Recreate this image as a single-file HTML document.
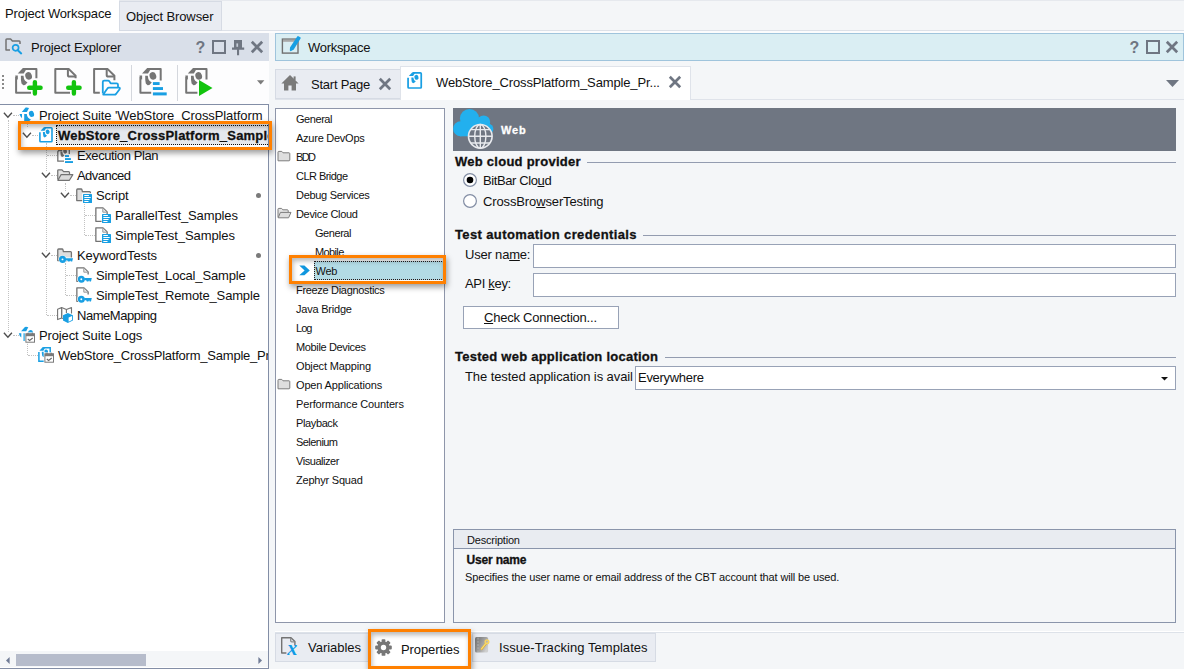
<!DOCTYPE html>
<html lang="en">
<head>
<meta charset="utf-8">
<title>Project Workspace</title>
<style>
html,body{margin:0;padding:0;}
body{width:1184px;height:669px;position:relative;overflow:hidden;background:#f4f6f8;font-family:"Liberation Sans",sans-serif;font-size:13px;color:#111;}
.a{position:absolute;white-space:nowrap;}
.t{position:absolute;white-space:nowrap;line-height:16px;height:16px;margin-top:1px;}
.s{font-size:11px;line-height:14px;height:14px;margin-top:0;}
.b{font-weight:bold;-webkit-text-stroke:0.3px currentColor;}
u{text-decoration:underline;text-underline-offset:1px;}
svg{position:absolute;overflow:visible;}
.hl{position:absolute;height:1px;background:#939cb0;}
.inp{position:absolute;background:#fff;border:1px solid #98a2b6;box-sizing:border-box;}
.ob{position:absolute;border:3px solid #ff8000;box-sizing:border-box;box-shadow:1px 3px 6px rgba(0,0,0,.4), inset 1px 3px 5px rgba(0,0,0,.28);}
.vd{position:absolute;width:0;border-left:1px dotted #c2c2c2;}
.hd{position:absolute;height:0;border-top:1px dotted #c2c2c2;}
</style>
</head>
<body>
<!-- top tabs -->
<div class="a" style="left:0;top:0;width:119px;height:33px;background:#fff;"></div>
<div class="a" style="left:119px;top:30px;width:1065px;height:1px;background:#dde1e8;"></div>
<div class="a" style="left:119px;top:31px;width:1065px;height:2px;background:#fcfcfd;"></div>
<div class="a" style="left:119px;top:0;width:1065px;height:1px;background:#e6e9ee;"></div>
<div class="a" style="left:119px;top:1px;width:103px;height:30px;box-sizing:border-box;background:#e9ecf2;border:1px solid #d6dbe4;"></div>
<div class="t" style="letter-spacing:-0.147px;left:5px;top:5px;">Project Workspace</div>
<div class="t" style="letter-spacing:-0.106px;left:126px;top:8px;">Object Browser</div>

<!-- left header -->
<div class="a" style="left:0;top:33px;width:269px;height:28px;background:#d9dfe9;"></div>
<div class="t" style="letter-spacing:-0.146px;left:31px;top:39px;">Project Explorer</div>

<!-- toolbar -->
<div class="a" style="left:0;top:61px;width:269px;height:43px;background:#fdfdfe;"></div>
<div class="a" style="left:131px;top:65px;width:1px;height:36px;background:#d4d7dd;"></div>
<div class="a" style="left:177px;top:65px;width:1px;height:36px;background:#d4d7dd;"></div>

<div class="a" style="left:2px;top:75px;width:2px;height:16px;background:repeating-linear-gradient(#8a8a8a 0 2px,transparent 2px 4px);"></div>
<svg style="left:0;top:61px" width="269" height="43" viewBox="0 61 269 43"><path d="M31 92.8 L16.1 92.8 L16.1 76.4 M23.1 69.1 L36.4 69.1 L36.4 78.2" fill="none" stroke="#757575" stroke-width="2" stroke-linejoin="round"/><path d="M17.7 73.6 L22.9 68.1 L27.1 68.1 L23.7 73.6 Z" fill="#757575"/><path d="M15.1 75.6 L17.8 75.6 L17.8 79.6 L17.1 79.6 Z" fill="#757575"/><path d="M20.9 75.8 L23.5 75.8 Q23.7 79.4 25.1 80.8 L27.5 82.4 Q25.7 85 23.299999999999997 85.2 L21.5 83.6 Q20.7 80 20.9 75.8 Z" fill="#757575"/><ellipse cx="28.6" cy="75.9" rx="3.3" ry="3.9" transform="rotate(-18 28.6 75.9)" fill="#757575"/><path d="M34.9 82.1 V93.5 M29.2 87.8 H40.6" stroke="#12c40e" stroke-width="4.4" stroke-linecap="round"/><path d="M70 92.8 L55.3 92.8 L55.3 69.1 L68.89999999999999 69.1 L75.6 75.8 L75.6 78.2" fill="none" stroke="#757575" stroke-width="2" stroke-linejoin="round"/><path d="M67.89999999999999 69.6 L67.89999999999999 75 Q67.89999999999999 76.6 69.5 76.6 L75.1 76.6" fill="none" stroke="#757575" stroke-width="2"/><path d="M73.9 82.1 V93.5 M68.2 87.8 H79.60000000000001" stroke="#12c40e" stroke-width="4.4" stroke-linecap="round"/><path d="M99.8 92.8 L94.1 92.8 L94.1 69.1 L107.69999999999999 69.1 L114.39999999999999 75.8 L114.39999999999999 80.2" fill="none" stroke="#757575" stroke-width="2" stroke-linejoin="round"/><path d="M106.69999999999999 69.6 L106.69999999999999 75 Q106.69999999999999 76.6 108.3 76.6 L113.89999999999999 76.6" fill="none" stroke="#757575" stroke-width="2"/><path d="M102.8 93.6 L102.8 82 Q102.8 80.6 104.2 80.6 L108 80.6 Q109 80.6 109.6 81.6 L110.6 83.3 L116.6 83.3 Q118 83.3 118 84.7 L118 87" fill="none" stroke="#199fe3" stroke-width="1.8" stroke-linejoin="round"/><path d="M103.2 94.5 L107.4 88.6 Q108 87.7 109 87.7 L119 87.7 Q120.4 87.9 119.6 89.2 L116 94 Q115.4 94.6 114.6 94.6 Z" fill="#fff" stroke="#199fe3" stroke-width="1.8" stroke-linejoin="round"/><path d="M151.2 92.8 L140.4 92.8 L140.4 76.4 M147.4 69.1 L160.70000000000002 69.1 L160.70000000000002 80.6" fill="none" stroke="#757575" stroke-width="2" stroke-linejoin="round"/><path d="M142.0 73.6 L147.20000000000002 68.1 L151.4 68.1 L148.0 73.6 Z" fill="#757575"/><path d="M139.4 75.6 L142.1 75.6 L142.1 79.6 L141.4 79.6 Z" fill="#757575"/><path d="M145.20000000000002 75.8 L147.8 75.8 Q148.0 79.4 149.4 80.8 L151.8 82.4 Q150.0 85 147.6 85.2 L145.8 83.6 Q145.0 80 145.20000000000002 75.8 Z" fill="#757575"/><ellipse cx="152.9" cy="75.9" rx="3.3" ry="3.9" transform="rotate(-18 152.9 75.9)" fill="#757575"/><rect x="152.9" y="82.1" width="6.7" height="2.9" fill="#199fe3"/><rect x="152.9" y="87.1" width="10.1" height="2.9" fill="#199fe3"/><rect x="152.9" y="92.4" width="13.8" height="3" fill="#199fe3"/><path d="M197.4 92.8 L186.2 92.8 L186.2 76.4 M193.2 69.1 L206.5 69.1 L206.5 79.6" fill="none" stroke="#757575" stroke-width="2" stroke-linejoin="round"/><path d="M187.79999999999998 73.6 L193.0 68.1 L197.2 68.1 L193.79999999999998 73.6 Z" fill="#757575"/><path d="M185.2 75.6 L187.89999999999998 75.6 L187.89999999999998 79.6 L187.2 79.6 Z" fill="#757575"/><path d="M191.0 75.8 L193.6 75.8 Q193.79999999999998 79.4 195.2 80.8 L197.6 82.4 Q195.79999999999998 85 193.39999999999998 85.2 L191.6 83.6 Q190.79999999999998 80 191.0 75.8 Z" fill="#757575"/><ellipse cx="198.7" cy="75.9" rx="3.3" ry="3.9" transform="rotate(-18 198.7 75.9)" fill="#757575"/><path d="M199 80 L212.5 88.1 L199 96 Z" fill="#12c40e"/><path d="M257 80.3 H264.4 L260.7 84.4 Z" fill="#7b7b7b"/></svg>
<!-- tree -->
<div class="a" id="tree" style="left:0;top:104px;width:269px;height:565px;box-sizing:border-box;background:#fff;border:1px solid #838ea6;border-left:none;border-top:none;overflow:hidden;">
<div class="a" style="left:0;top:0;width:269px;height:1px;background:#838ea6;z-index:3;"></div>
<div class="a" style="left:56px;top:21px;width:213px;height:20px;background:#e5e8ed;"></div>
<div class="a" style="left:56px;top:21px;width:230px;height:20px;box-sizing:border-box;border:1px dotted #111;"></div>
<div class="vd" style="left:8px;top:16px;height:212px;"></div>
<div class="hd" style="left:13px;top:11px;width:6px;"></div>
<div class="hd" style="left:13px;top:231px;width:6px;"></div>
<div class="vd" style="left:27px;top:18px;height:5px;"></div>
<div class="hd" style="left:32px;top:31px;width:6px;"></div>
<div class="vd" style="left:46px;top:39px;height:28px;"></div>
<div class="vd" style="left:46px;top:76px;height:71px;"></div>
<div class="vd" style="left:46px;top:156px;height:55px;"></div>
<div class="hd" style="left:47px;top:51px;width:10px;"></div>
<div class="hd" style="left:51px;top:71px;width:6px;"></div>
<div class="hd" style="left:51px;top:151px;width:6px;"></div>
<div class="hd" style="left:47px;top:211px;width:10px;"></div>
<div class="vd" style="left:65px;top:79px;height:8px;"></div>
<div class="hd" style="left:70px;top:91px;width:6px;"></div>
<div class="vd" style="left:84px;top:99px;height:32px;"></div>
<div class="hd" style="left:85px;top:111px;width:10px;"></div>
<div class="hd" style="left:85px;top:131px;width:10px;"></div>
<div class="vd" style="left:65px;top:159px;height:32px;"></div>
<div class="hd" style="left:66px;top:171px;width:10px;"></div>
<div class="hd" style="left:66px;top:191px;width:10px;"></div>
<div class="vd" style="left:27px;top:239px;height:12px;"></div>
<div class="hd" style="left:28px;top:251px;width:10px;"></div>
<svg style="left:19px;top:3px" width="17" height="17" viewBox="0 0 17 17"><g fill="#199fe3"><path d="M2.8 5 L7.9 5 L10 1 Q8.6 0.3 6.6 0.6 Z"/><ellipse cx="12.5" cy="6.9" rx="2.5" ry="3.1" transform="rotate(-18 12.5 6.9)"/><path d="M0.5 7 L3 7 L3 11.2 Q1 9.6 0.5 7 Z"/><path d="M5.2 7 L7.8 7 Q8 9.6 9.2 10.8 Q10.4 12 12 12.4 Q10.6 14.2 8 14.6 L5.2 14.6 Z"/></g></svg>
<div class="t" style="letter-spacing:-0.096px;left:39px;top:3px;">Project Suite 'WebStore_CrossPlatform_Sample' (1 project)</div>
<svg style="left:3px;top:8px" width="10" height="7" viewBox="0 0 10 7"><path d="M0.9 0.8 L4.9 5.2 L8.9 0.8" fill="none" stroke="#4d4d4d" stroke-width="1.35"/></svg>
<svg style="left:38px;top:23px" width="17" height="17" viewBox="0 0 17 17"><path d="M1.9 5.2 L1.9 13.9 Q1.9 14.7 2.7 14.7 L13.2 14.7 Q14 14.7 14 13.9 L14 1.6 Q14 0.8 13.2 0.8 L6.4 0.8" fill="none" stroke="#199fe3" stroke-width="1.6"/><g fill="#199fe3"><path d="M2.6 3.7 L6.6 3.7 L8.4 0.6 L5.8 0.3 Z"/><ellipse cx="9.6" cy="4.9" rx="1.9" ry="2.3" transform="rotate(-18 9.6 4.9)"/><path d="M4.9 5 L6.8 5 Q7 7 7.8 7.8 L9 8.6 Q8 10.2 6.6 10.4 L5.4 9.4 Q4.9 7.4 4.9 5 Z"/></g></svg>
<div class="t b" style="letter-spacing:0.209px;left:58px;top:23px;">WebStore_CrossPlatform_Sample_Project (1 test item)</div>
<svg style="left:22px;top:28px" width="10" height="7" viewBox="0 0 10 7"><path d="M0.9 0.8 L4.9 5.2 L8.9 0.8" fill="none" stroke="#4d4d4d" stroke-width="1.35"/></svg>
<svg style="left:57px;top:43px" width="17" height="17" viewBox="0 0 17 17"><path d="M7 14.2 L0.8 14.2 L0.8 4.6 L3.6 1 L12.3 1 L12.3 7" fill="none" stroke="#737373" stroke-width="1.3" stroke-linejoin="round"/><g transform="translate(3.4 4.6) scale(1.0)" fill="#737373"><path d="M0 0 L1.9 0 Q2.1 2 2.9 2.8 L4.1 3.6 Q3.1 5.2 1.7 5.4 L0.5 4.4 Q0 2.4 0 0 Z"/><ellipse cx="4.7" cy="-0.2" rx="1.9" ry="2.3" transform="rotate(-18 4.7 -0.2)"/></g><path d="M1.4 3.6 L4.4 3.6 L5.6 1.6" fill="none" stroke="#737373" stroke-width="1.2"/><rect x="8" y="8.1" width="4" height="1.9" fill="#199fe3"/><rect x="8" y="11.1" width="5.9" height="1.9" fill="#199fe3"/><rect x="8" y="14.1" width="8" height="1.9" fill="#199fe3"/></svg>
<div class="t" style="letter-spacing:-0.403px;left:77px;top:43px;">Execution Plan</div>
<svg style="left:57px;top:63px" width="17" height="17" viewBox="0 0 17 17"><path d="M0.75 12.6 L0.75 3.6 Q0.75 2.8 1.6 2.8 L5 2.8 L6.6 4.7 L11.6 4.7 Q12.5 4.7 12.5 5.6 L12.5 7.4" fill="#e4e4e4" stroke="#737373" stroke-width="1.25" stroke-linejoin="round"/><path d="M0.9 13.3 L4 7.7 L15.8 7.7 L12.4 13.3 Z" fill="#dcdcdc" stroke="#737373" stroke-width="1.25" stroke-linejoin="round"/></svg>
<div class="t" style="letter-spacing:-0.547px;left:77px;top:63px;">Advanced</div>
<svg style="left:41px;top:68px" width="10" height="7" viewBox="0 0 10 7"><path d="M0.9 0.8 L4.9 5.2 L8.9 0.8" fill="none" stroke="#4d4d4d" stroke-width="1.35"/></svg>
<svg style="left:76px;top:83px" width="17" height="17" viewBox="0 0 17 17"><path d="M0.75 13.6 L0.75 2.9 Q0.75 2 1.6 2 L5 2 Q5.8 2 6 2.8 L6.4 4.7 L13.6 4.7 Q14.4 4.7 14.4 5.6 L14.4 13.6 Z" fill="#dedede" stroke="#737373" stroke-width="1.3" stroke-linejoin="round"/><rect x="6.2" y="6.2" width="11" height="11" fill="#fff"/><rect x="7" y="7" width="9" height="9" rx="0.6" fill="#199fe3"/><rect x="8.3" y="8" width="4.6" height="1" fill="#fff"/><rect x="8.3" y="10" width="6.4" height="1" fill="#fff"/><rect x="8.3" y="12" width="5.2" height="1" fill="#fff"/><rect x="8.3" y="14" width="4.2" height="1" fill="#fff"/></svg>
<div class="t" style="letter-spacing:-0.127px;left:96px;top:83px;">Script</div>
<svg style="left:60px;top:88px" width="10" height="7" viewBox="0 0 10 7"><path d="M0.9 0.8 L4.9 5.2 L8.9 0.8" fill="none" stroke="#4d4d4d" stroke-width="1.35"/></svg>
<div class="a" style="left:256px;top:89px;width:5px;height:5px;border-radius:3px;background:#7a7a7a;"></div>
<svg style="left:95px;top:103px" width="17" height="17" viewBox="0 0 17 17"><path d="M6.6 14.35 L0.85 14.35 L0.85 0.85 L8 0.85 L12.15 5 L12.15 7.4" fill="none" stroke="#737373" stroke-width="1.3" stroke-linejoin="round"/><path d="M7.8 1.2 L7.8 5.2 L11.8 5.2" fill="#e9e9e9" stroke="#9b9b9b" stroke-width="1"/><rect x="7" y="7" width="9" height="9" rx="0.6" fill="#199fe3"/><rect x="8.3" y="8" width="4.6" height="1" fill="#fff"/><rect x="8.3" y="10" width="6.4" height="1" fill="#fff"/><rect x="8.3" y="12" width="5.2" height="1" fill="#fff"/><rect x="8.3" y="14" width="4.2" height="1" fill="#fff"/></svg>
<div class="t" style="letter-spacing:-0.106px;left:115px;top:103px;">ParallelTest_Samples</div>
<svg style="left:95px;top:123px" width="17" height="17" viewBox="0 0 17 17"><path d="M6.6 14.35 L0.85 14.35 L0.85 0.85 L8 0.85 L12.15 5 L12.15 7.4" fill="none" stroke="#737373" stroke-width="1.3" stroke-linejoin="round"/><path d="M7.8 1.2 L7.8 5.2 L11.8 5.2" fill="#e9e9e9" stroke="#9b9b9b" stroke-width="1"/><rect x="7" y="7" width="9" height="9" rx="0.6" fill="#199fe3"/><rect x="8.3" y="8" width="4.6" height="1" fill="#fff"/><rect x="8.3" y="10" width="6.4" height="1" fill="#fff"/><rect x="8.3" y="12" width="5.2" height="1" fill="#fff"/><rect x="8.3" y="14" width="4.2" height="1" fill="#fff"/></svg>
<div class="t" style="letter-spacing:-0.082px;left:115px;top:123px;">SimpleTest_Samples</div>
<svg style="left:57px;top:143px" width="17" height="17" viewBox="0 0 17 17"><path d="M0.75 13.6 L0.75 2.9 Q0.75 2 1.6 2 L5 2 Q5.8 2 6 2.8 L6.4 4.7 L13.6 4.7 Q14.4 4.7 14.4 5.6 L14.4 10 L14.4 13.6 Z" fill="#dedede" stroke="#737373" stroke-width="1.3" stroke-linejoin="round"/><g fill="#fff" stroke="#fff" stroke-width="1.2"><circle cx="5.5" cy="12.4" r="3.4"/><path d="M8.4 11.2 H16 L15.2 14.600000000000001 H13.8 L13.3 13.4 L12.6 14.600000000000001 H11 L10.4 13.4 H8.4 Z"/></g><circle cx="5.5" cy="12.4" r="2.25" fill="#fff" stroke="#199fe3" stroke-width="2.6"/><g fill="#199fe3"><path d="M8.4 11.2 H16 L15.2 14.600000000000001 H13.8 L13.3 13.4 L12.6 14.600000000000001 H11 L10.4 13.4 H8.4 Z"/></g></svg>
<div class="t" style="letter-spacing:-0.084px;left:77px;top:143px;">KeywordTests</div>
<svg style="left:41px;top:148px" width="10" height="7" viewBox="0 0 10 7"><path d="M0.9 0.8 L4.9 5.2 L8.9 0.8" fill="none" stroke="#4d4d4d" stroke-width="1.35"/></svg>
<div class="a" style="left:256px;top:149px;width:5px;height:5px;border-radius:3px;background:#7a7a7a;"></div>
<svg style="left:76px;top:163px" width="17" height="17" viewBox="0 0 17 17"><path d="M2.2 14.35 L0.85 14.35 L0.85 0.85 L8 0.85 L12.15 5 L12.15 7.4" fill="none" stroke="#737373" stroke-width="1.3" stroke-linejoin="round"/><path d="M7.8 1.2 L7.8 5.2 L11.8 5.2" fill="#e9e9e9" stroke="#9b9b9b" stroke-width="1"/><g fill="#fff" stroke="#fff" stroke-width="1.2"><circle cx="5.3" cy="12.3" r="3.4"/><path d="M8.200000000000001 11.100000000000001 H15.8 L15.0 14.5 H13.600000000000001 L13.100000000000001 13.3 L12.4 14.5 H10.8 L10.200000000000001 13.3 H8.200000000000001 Z"/></g><circle cx="5.3" cy="12.3" r="2.25" fill="#fff" stroke="#199fe3" stroke-width="2.6"/><g fill="#199fe3"><path d="M8.200000000000001 11.100000000000001 H15.8 L15.0 14.5 H13.600000000000001 L13.100000000000001 13.3 L12.4 14.5 H10.8 L10.200000000000001 13.3 H8.200000000000001 Z"/></g></svg>
<div class="t" style="letter-spacing:-0.159px;left:96px;top:163px;">SimpleTest_Local_Sample</div>
<svg style="left:76px;top:183px" width="17" height="17" viewBox="0 0 17 17"><path d="M2.2 14.35 L0.85 14.35 L0.85 0.85 L8 0.85 L12.15 5 L12.15 7.4" fill="none" stroke="#737373" stroke-width="1.3" stroke-linejoin="round"/><path d="M7.8 1.2 L7.8 5.2 L11.8 5.2" fill="#e9e9e9" stroke="#9b9b9b" stroke-width="1"/><g fill="#fff" stroke="#fff" stroke-width="1.2"><circle cx="5.3" cy="12.3" r="3.4"/><path d="M8.200000000000001 11.100000000000001 H15.8 L15.0 14.5 H13.600000000000001 L13.100000000000001 13.3 L12.4 14.5 H10.8 L10.200000000000001 13.3 H8.200000000000001 Z"/></g><circle cx="5.3" cy="12.3" r="2.25" fill="#fff" stroke="#199fe3" stroke-width="2.6"/><g fill="#199fe3"><path d="M8.200000000000001 11.100000000000001 H15.8 L15.0 14.5 H13.600000000000001 L13.100000000000001 13.3 L12.4 14.5 H10.8 L10.200000000000001 13.3 H8.200000000000001 Z"/></g></svg>
<div class="t" style="letter-spacing:-0.163px;left:96px;top:183px;">SimpleTest_Remote_Sample</div>
<svg style="left:57px;top:203px" width="17" height="17" viewBox="0 0 17 17"><path d="M0.6 2.2 L4.6 0.6 L4.6 11 L0.6 12.6 Z M4.6 0.6 L9.4 2.6 L14.5 0.6 L14.5 6.4 M9.4 2.6 L9.4 6 M4.6 11 L6 11.6" fill="none" stroke="#737373" stroke-width="1.1" stroke-linejoin="round"/><path d="M5.5 1.4 L5.5 10.6" stroke="#c4c4c4" stroke-width="0.8"/><path d="M10.8 6 L15.9 8.2 L15.9 13.6 L10.8 16 L6 13.6 L6 8.2 Z" fill="#199fe3"/><path d="M11.6 10.4 L15 8.9 L15 13.1 L11.6 14.7 Z" fill="#fff"/></svg>
<div class="t" style="letter-spacing:-0.455px;left:77px;top:203px;">NameMapping</div>
<svg style="left:19px;top:223px" width="17" height="17" viewBox="0 0 17 17"><g transform="translate(-0.7,-0.7)"><g fill="#199fe3"><path d="M2.8 5 L7.9 5 L10 1 Q8.6 0.3 6.6 0.6 Z"/><ellipse cx="12.5" cy="6.9" rx="2.5" ry="3.1" transform="rotate(-18 12.5 6.9)"/><path d="M0.5 7 L3 7 L3 11.2 Q1 9.6 0.5 7 Z"/><path d="M5.2 7 L7.8 7 Q8 9.6 9.2 10.8 Q10.4 12 12 12.4 Q10.6 14.2 8 14.6 L5.2 14.6 Z"/></g></g><rect x="5.7" y="5.4" width="11" height="11.4" fill="#fff"/><rect x="6.9" y="6.8" width="8.6" height="8.4" fill="#fff" stroke="#7a7a7a" stroke-width="1"/><rect x="6.9" y="6.6" width="8.6" height="2.6" fill="#7a7a7a"/><path d="M8.8 12.0 L10.600000000000001 13.5 L13.7 11.0" fill="none" stroke="#6a6a6a" stroke-width="1.1"/><path d="M9.0 5.8 v1.4 M13.4 5.8 v1.4" stroke="#7a7a7a" stroke-width="1.3"/></svg>
<div class="t" style="letter-spacing:-0.13px;left:39px;top:223px;">Project Suite Logs</div>
<svg style="left:3px;top:228px" width="10" height="7" viewBox="0 0 10 7"><path d="M0.9 0.8 L4.9 5.2 L8.9 0.8" fill="none" stroke="#4d4d4d" stroke-width="1.35"/></svg>
<svg style="left:38px;top:243px" width="17" height="17" viewBox="0 0 17 17"><path d="M7 14.3 L0.9 14.3 L0.9 5 M5.4 0.8 L12.2 0.8 L12.2 6.4" fill="none" stroke="#199fe3" stroke-width="1.5"/><g fill="#199fe3"><path d="M1.4 3.7 L5.4 3.7 L7.2 0.6 L4.8 0.1 Z"/></g><g transform="translate(3.8 4.8) scale(0.95)" fill="#199fe3"><path d="M0 0 L1.9 0 Q2.1 2 2.9 2.8 L4.1 3.6 Q3.1 5.2 1.7 5.4 L0.5 4.4 Q0 2.4 0 0 Z"/><ellipse cx="4.7" cy="-0.2" rx="1.9" ry="2.3" transform="rotate(-18 4.7 -0.2)"/></g><rect x="5.7" y="5.4" width="11" height="11.4" fill="#fff"/><rect x="6.9" y="6.8" width="8.6" height="8.4" fill="#fff" stroke="#7a7a7a" stroke-width="1"/><rect x="6.9" y="6.6" width="8.6" height="2.6" fill="#7a7a7a"/><path d="M8.8 12.0 L10.600000000000001 13.5 L13.7 11.0" fill="none" stroke="#6a6a6a" stroke-width="1.1"/><path d="M9.0 5.8 v1.4 M13.4 5.8 v1.4" stroke="#7a7a7a" stroke-width="1.3"/></svg>
<div class="t" style="letter-spacing:-0.219px;left:58px;top:243px;">WebStore_CrossPlatform_Sample_Project Log</div>
</div>
<!-- scrollbar -->
<div class="a" style="left:0;top:651px;width:268px;height:16px;background:#f4f6f8;"></div>
<div class="a" style="left:16px;top:654px;width:130px;height:12px;background:#b6bccb;"></div>
<div class="a" style="left:0;top:667px;width:268px;height:1px;background:#fff;"></div>
<svg style="left:6px;top:657px" width="4" height="7" viewBox="0 0 4 7"><path d="M3.6 0 V7 L0 3.5 Z" fill="#707c96"/></svg>
<svg style="left:258px;top:657px" width="4" height="7" viewBox="0 0 4 7"><path d="M0.4 0 V7 L4 3.5 Z" fill="#707c96"/></svg>

<!-- workspace header -->
<div class="a" style="left:275px;top:33px;width:909px;height:28px;box-sizing:border-box;background:#daeef3;border:1px solid #9fc4dc;"></div>
<div class="t" style="letter-spacing:-0.3px;left:308px;top:39px;">Workspace</div>

<!-- doc tabs -->
<div class="a" style="left:275px;top:99px;width:909px;height:1px;background:#dfe3ea;"></div>
<div class="a" style="left:275px;top:69px;width:126px;height:30px;box-sizing:border-box;background:#e9ecf2;border:1px solid #d6dbe4;"></div>
<div class="a" style="left:400px;top:66px;width:291px;height:34px;box-sizing:border-box;background:#fff;border:1px solid #dfe3ea;border-bottom:none;"></div>
<div class="t" style="letter-spacing:-0.238px;left:311px;top:76px;">Start Page</div>
<div class="t" style="letter-spacing:-0.142px;left:436px;top:74px;">WebStore_CrossPlatform_Sample_Pr...</div>

<!-- list box -->
<div class="a" style="left:275px;top:108px;width:170px;height:515px;box-sizing:border-box;background:#fff;border:1px solid #8e96aa;"></div>
<div class="a" style="left:314px;top:261px;width:130px;height:19px;box-sizing:border-box;background:#b3dbe5;border:1px dotted #2a1a1a;"></div>

<div class="t s" style="letter-spacing:-0.44px;left:296px;top:112px;">General</div>
<div class="t s" style="letter-spacing:-0.248px;left:296px;top:131px;">Azure DevOps</div>
<div class="t s" style="letter-spacing:-1.617px;left:296px;top:150px;">BDD</div>
<svg style="left:277px;top:150px" width="15" height="12" viewBox="0 0 15 12"><path d="M1 10.8 L1 2.2 Q1 1.4 1.8 1.4 L4.8 1.4 L6 2.8 L12 2.8 Q12.8 2.8 12.8 3.6 L12.8 10 Q12.8 10.8 12 10.8 Z" fill="#dedede" stroke="#7d7d7d" stroke-width="1" stroke-linejoin="round"/></svg>
<div class="t s" style="letter-spacing:-0.54px;left:296px;top:169px;">CLR Bridge</div>
<div class="t s" style="letter-spacing:-0.297px;left:296px;top:188px;">Debug Services</div>
<div class="t s" style="letter-spacing:-0.32px;left:296px;top:207px;">Device Cloud</div>
<svg style="left:277px;top:207px" width="15" height="12" viewBox="0 0 15 12"><path d="M1 10.4 L1 2.2 Q1 1.4 1.8 1.4 L4.6 1.4 L5.8 2.8 L10.4 2.8 Q11.2 2.8 11.2 3.6 L11.2 5" fill="#e4e4e4" stroke="#7d7d7d" stroke-width="1"/><path d="M1.2 10.8 L3.4 5.4 L14 5.4 L11.6 10.8 Z" fill="#dedede" stroke="#7d7d7d" stroke-width="1" stroke-linejoin="round"/></svg>
<div class="t s" style="letter-spacing:-0.44px;left:315px;top:226px;">General</div>
<div class="t s" style="letter-spacing:-0.621px;left:315px;top:245px;">Mobile</div>
<div class="t s" style="letter-spacing:-0.311px;left:315.6px;top:264px;">Web</div>
<div class="t s" style="letter-spacing:-0.315px;left:296px;top:283px;">Freeze Diagnostics</div>
<div class="t s" style="letter-spacing:-0.219px;left:296px;top:302px;">Java Bridge</div>
<div class="t s" style="letter-spacing:-0.98px;left:296px;top:321px;">Log</div>
<div class="t s" style="letter-spacing:-0.353px;left:296px;top:340px;">Mobile Devices</div>
<div class="t s" style="letter-spacing:-0.157px;left:296px;top:359px;">Object Mapping</div>
<div class="t s" style="letter-spacing:-0.154px;left:296px;top:378px;">Open Applications</div>
<svg style="left:277px;top:378px" width="15" height="12" viewBox="0 0 15 12"><path d="M1 10.8 L1 2.2 Q1 1.4 1.8 1.4 L4.8 1.4 L6 2.8 L12 2.8 Q12.8 2.8 12.8 3.6 L12.8 10 Q12.8 10.8 12 10.8 Z" fill="#dedede" stroke="#7d7d7d" stroke-width="1" stroke-linejoin="round"/></svg>
<div class="t s" style="letter-spacing:-0.146px;left:296px;top:397px;">Performance Counters</div>
<div class="t s" style="letter-spacing:-0.377px;left:296px;top:416px;">Playback</div>
<div class="t s" style="letter-spacing:-0.551px;left:296px;top:435px;">Selenium</div>
<div class="t s" style="letter-spacing:-0.456px;left:296px;top:454px;">Visualizer</div>
<div class="t s" style="letter-spacing:-0.21px;left:296px;top:473px;">Zephyr Squad</div>
<svg style="left:299px;top:264.7px" width="11" height="11" viewBox="0 0 11 11"><path d="M0.3 0.5 L5.4 0.5 L10.8 5.4 L5.4 10.3 L0.3 10.3 L5.6 5.4 Z" fill="#0f96de"/></svg>
<!-- right panel -->
<div class="a" style="left:453px;top:108px;width:723px;height:43px;background:#6f7682;"></div>
<div class="t s b" style="letter-spacing:0.884px;left:501px;top:123px;color:#fff;">Web</div>

<div class="t b" style="letter-spacing:0.258px;left:455px;top:153px;">Web cloud provider</div>
<div class="hl" style="left:587px;top:162px;width:589px;"></div>
<div class="t" style="letter-spacing:-0.4px;left:483px;top:172px;">BitBar Clo<u>u</u>d</div>
<div class="t" style="letter-spacing:-0.129px;left:483px;top:193px;">CrossBro<u>w</u>serTesting</div>

<div class="t b" style="letter-spacing:0.377px;left:455px;top:226px;">Test automation credentials</div>
<div class="hl" style="left:643px;top:235px;width:533px;"></div>
<div class="t" style="letter-spacing:-0.191px;left:465px;top:246px;">User na<u>m</u>e:</div>
<div class="inp" style="left:533px;top:244px;width:643px;height:24px;"></div>
<div class="t" style="letter-spacing:-0.317px;left:465px;top:275px;">API <u>k</u>ey:</div>
<div class="inp" style="left:533px;top:273px;width:643px;height:24px;"></div>
<div class="inp" style="left:463px;top:306px;width:156px;height:23px;"></div>
<div class="t" style="letter-spacing:-0.227px;left:484px;top:309px;"><u>C</u>heck Connection...</div>

<div class="t b" style="letter-spacing:0.249px;left:455px;top:348px;">Tested web application location</div>
<div class="hl" style="left:665px;top:357px;width:511px;"></div>
<div class="t" style="letter-spacing:-0.085px;left:465px;top:368px;">The tested application is avail</div>
<div class="inp" style="left:635px;top:366px;width:541px;height:24px;"></div>
<div class="t" style="letter-spacing:-0.293px;left:638px;top:369px;">Everywhere</div>

<!-- description -->
<div class="a" style="left:453px;top:529px;width:723px;height:94px;box-sizing:border-box;border:1px solid #8a95ab;"></div>
<div class="a" style="left:454px;top:530px;width:721px;height:18px;background:#e9ecf1;border-bottom:1px solid #8a95ab;"></div>
<div class="t s" style="letter-spacing:-0.203px;left:467px;top:533px;">Description</div>
<div class="t s b" style="letter-spacing:-0.172px;left:466.5px;top:553px;font-size:12px;">User name</div>
<div class="t s" style="letter-spacing:-0.13px;left:465px;top:570px;">Specifies the user name or email address of the CBT account that will be used.</div>

<!-- bottom tabs -->
<div class="a" style="left:275px;top:631px;width:909px;height:1px;background:#fff;border-bottom:1px solid #dde2e9;"></div>
<div class="a" style="left:275px;top:633px;width:95px;height:29px;box-sizing:border-box;background:#e9ecf2;border:1px solid #d6dbe4;"></div>
<div class="a" style="left:472px;top:633px;width:184px;height:29px;box-sizing:border-box;background:#e9ecf2;border:1px solid #d6dbe4;"></div>
<div class="a" style="left:371px;top:632px;width:97px;height:34px;background:#fff;"></div>
<div class="t" style="letter-spacing:-0.029px;left:308px;top:639px;">Variables</div>
<div class="t" style="letter-spacing:-0.094px;left:401px;top:641px;">Properties</div>
<div class="t" style="letter-spacing:0.052px;left:499px;top:639px;">Issue-Tracking Templates</div>

<svg style="left:4px;top:37px" width="20" height="20" viewBox="0 0 20 20"><path d="M6 13 L2 13 L2 2.8 Q2 2 2.8 2 L6.6 2 L8.4 4 L15.2 4 Q16 4 16 4.8 L16 7" fill="none" stroke="#737373" stroke-width="1.5" stroke-linejoin="round"/><circle cx="11.6" cy="10.8" r="3" fill="none" stroke="#199fe3" stroke-width="1.7"/><path d="M13.8 13.2 L17.2 16.4" stroke="#199fe3" stroke-width="2" stroke-linecap="round"/></svg>
<div class="t b" style="left:195.5px;top:39px;font-size:16px;color:#6f7682;font-weight:bold;-webkit-text-stroke:0;">?</div>
<div class="a" style="left:212px;top:40px;width:14px;height:14px;box-sizing:border-box;border:2px solid #6f7682;"></div>
<svg style="left:232px;top:40px" width="13" height="16" viewBox="0 0 13 16"><path d="M2 0 H10 V7.6 H12.2 V9.7 H7.1 V15.2 H5 V9.7 H0 V7.6 H2 Z" fill="#6f7682"/><rect x="4.4" y="3.4" width="1.7" height="3.4" fill="#c5ccd8"/></svg>
<svg style="left:251px;top:41px" width="12" height="12" viewBox="0 0 12 12"><path d="M0.8 0.8 L11.2 11.2 M11.2 0.8 L0.8 11.2" stroke="#6f7682" stroke-width="2.7"/></svg>
<svg style="left:281px;top:36px" width="20" height="20" viewBox="0 0 20 20"><rect x="1.4" y="3.1" width="15.6" height="14" fill="none" stroke="#707070" stroke-width="1.4"/><rect x="2" y="3.6" width="14.4" height="2.2" fill="#a8a8a8"/><path d="M17 1 L18.8 2.1 L12 13 L9.7 14.2 L9.9 11.7 Z" fill="#199fe3" stroke="#199fe3" stroke-width="1.8" stroke-linejoin="round"/></svg>
<div class="t b" style="left:1129.5px;top:39px;font-size:16px;color:#6f7682;font-weight:bold;-webkit-text-stroke:0;">?</div>
<div class="a" style="left:1146px;top:40px;width:14px;height:14px;box-sizing:border-box;border:2px solid #6f7682;"></div>
<svg style="left:1166px;top:41px" width="12" height="12" viewBox="0 0 12 12"><path d="M0.8 0.8 L11.2 11.2 M11.2 0.8 L0.8 11.2" stroke="#6f7682" stroke-width="2.7"/></svg>
<svg style="left:1166px;top:80px" width="13" height="7" viewBox="0 0 13 7"><path d="M0 0 H13 L6.5 7 Z" fill="#6f7682"/></svg>
<svg style="left:281px;top:74px" width="18" height="18" viewBox="0 0 18 18"><path d="M9 1 L17.6 9.4 L15 9.4 L15 16.4 L10.6 16.4 L10.6 11.4 L7.4 11.4 L7.4 16.4 L3 16.4 L3 9.4 L0.4 9.4 Z" fill="#7a7a7a"/><rect x="12.6" y="2.4" width="2" height="4" fill="#7a7a7a"/></svg>
<svg style="left:379px;top:78px" width="12" height="12" viewBox="0 0 12 12"><path d="M0.8 0.8 L11.2 11.2 M11.2 0.8 L0.8 11.2" stroke="#6f7682" stroke-width="2.7"/></svg>
<svg style="left:669px;top:76px" width="12" height="12" viewBox="0 0 12 12"><path d="M0.8 0.8 L11.2 11.2 M11.2 0.8 L0.8 11.2" stroke="#6f7682" stroke-width="2.7"/></svg>
<svg style="left:406.3px;top:72.2px" width="18.5" height="18.5" viewBox="0 0 17 17"><path d="M1.9 5.2 L1.9 13.9 Q1.9 14.7 2.7 14.7 L13.2 14.7 Q14 14.7 14 13.9 L14 1.6 Q14 0.8 13.2 0.8 L6.4 0.8" fill="none" stroke="#199fe3" stroke-width="1.6"/><g fill="#199fe3"><path d="M2.6 3.7 L6.6 3.7 L8.4 0.6 L5.8 0.3 Z"/><ellipse cx="9.6" cy="4.9" rx="1.9" ry="2.3" transform="rotate(-18 9.6 4.9)"/><path d="M4.9 5 L6.8 5 Q7 7 7.8 7.8 L9 8.6 Q8 10.2 6.6 10.4 L5.4 9.4 Q4.9 7.4 4.9 5 Z"/></g></svg>
<svg style="left:453px;top:108px;overflow:hidden" width="60" height="42" viewBox="0 0 60 42"><g fill="#22b0ee"><circle cx="16.5" cy="10.5" r="9.6"/><circle cx="30.6" cy="14" r="6.6"/><circle cx="7.6" cy="20.8" r="7.5"/><circle cx="35" cy="21" r="5.4"/><rect x="7" y="14" width="28" height="14.3"/></g><circle cx="27.3" cy="28.3" r="11.8" fill="#6f7682" stroke="#e8eaee" stroke-width="1.6"/><ellipse cx="27.3" cy="28.3" rx="5.6" ry="11.8" fill="none" stroke="#e8eaee" stroke-width="1.4"/><path d="M27.3 16.5 V40.1 M15.5 28.3 H39.1 M17.6 21.6 H37 M17.6 35 H37" stroke="#e8eaee" stroke-width="1.4" fill="none"/></svg>
<svg style="left:462px;top:172px" width="16" height="38" viewBox="0 0 16 38"><circle cx="8" cy="8" r="6.4" fill="#fff" stroke="#828da4" stroke-width="1.2"/><circle cx="8" cy="8" r="3.3" fill="#000"/><circle cx="8" cy="29" r="6.4" fill="#fff" stroke="#828da4" stroke-width="1.2"/></svg>
<svg style="left:1161.4px;top:377px" width="8" height="4" viewBox="0 0 8 4"><path d="M0 0 H7 L3.5 3.6 Z" fill="#111"/></svg>
<svg style="left:279px;top:637px" width="22" height="22" viewBox="0 0 22 22"><path d="M7.4 16 L2.7 16 L2.7 0.7 L12 0.7 L15.9 4.6 L15.9 8.5" fill="none" stroke="#737373" stroke-width="1.4" stroke-linejoin="round"/><path d="M11.7 1 L11.7 3.8 Q11.7 4.9 12.8 4.9 L15.6 4.9" fill="none" stroke="#8a8a8a" stroke-width="1.3"/><text x="8.2" y="17.6" font-family="Liberation Serif,serif" font-style="italic" font-weight="bold" font-size="20" fill="#0f9be6">x</text></svg>
<svg style="left:375px;top:639px" width="17" height="17" viewBox="0 0 17 17"><g transform="translate(8.5 8.5)" fill="#777"><circle r="6"/><rect x="-1.9" y="-8.3" width="3.8" height="4" rx="0.9" transform="rotate(0)" /><rect x="-1.9" y="-8.3" width="3.8" height="4" rx="0.9" transform="rotate(45)" /><rect x="-1.9" y="-8.3" width="3.8" height="4" rx="0.9" transform="rotate(90)" /><rect x="-1.9" y="-8.3" width="3.8" height="4" rx="0.9" transform="rotate(135)" /><rect x="-1.9" y="-8.3" width="3.8" height="4" rx="0.9" transform="rotate(180)" /><rect x="-1.9" y="-8.3" width="3.8" height="4" rx="0.9" transform="rotate(225)" /><rect x="-1.9" y="-8.3" width="3.8" height="4" rx="0.9" transform="rotate(270)" /><rect x="-1.9" y="-8.3" width="3.8" height="4" rx="0.9" transform="rotate(315)" /><circle r="2.7" fill="#fff"/></g></svg>
<svg style="left:475px;top:637px" width="18" height="18" viewBox="0 0 18 18"><defs><linearGradient id="gb" x1="0" y1="0" x2="1" y2="0.6"><stop offset="0" stop-color="#777"/><stop offset="0.35" stop-color="#8a8a8a"/><stop offset="0.7" stop-color="#a9a9a9"/><stop offset="1" stop-color="#cfcfcf"/></linearGradient></defs><rect x="0" y="0" width="13.1" height="15.5" rx="1.6" fill="url(#gb)"/><path d="M3 0.6 V15" stroke="#b5b5b5" stroke-width="0.9" stroke-dasharray="2 1.2"/><path d="M6.6 12 L11 6.6" stroke="#dcae35" stroke-width="2.2" stroke-linecap="round"/><path d="M6.5 11.8 L11 6.2" stroke="#fadb72" stroke-width="1.3" stroke-linecap="round"/><circle cx="12" cy="4.8" r="1.8" fill="none" stroke="#f7d462" stroke-width="1.5"/></svg>
<!-- orange boxes -->
<div class="ob" style="left:18px;top:121px;width:254px;height:29px;"></div>
<div class="ob" style="left:289px;top:255px;width:157px;height:29px;"></div>
<div class="ob" style="left:368px;top:629px;width:103px;height:40px;"></div>
</body>
</html>
